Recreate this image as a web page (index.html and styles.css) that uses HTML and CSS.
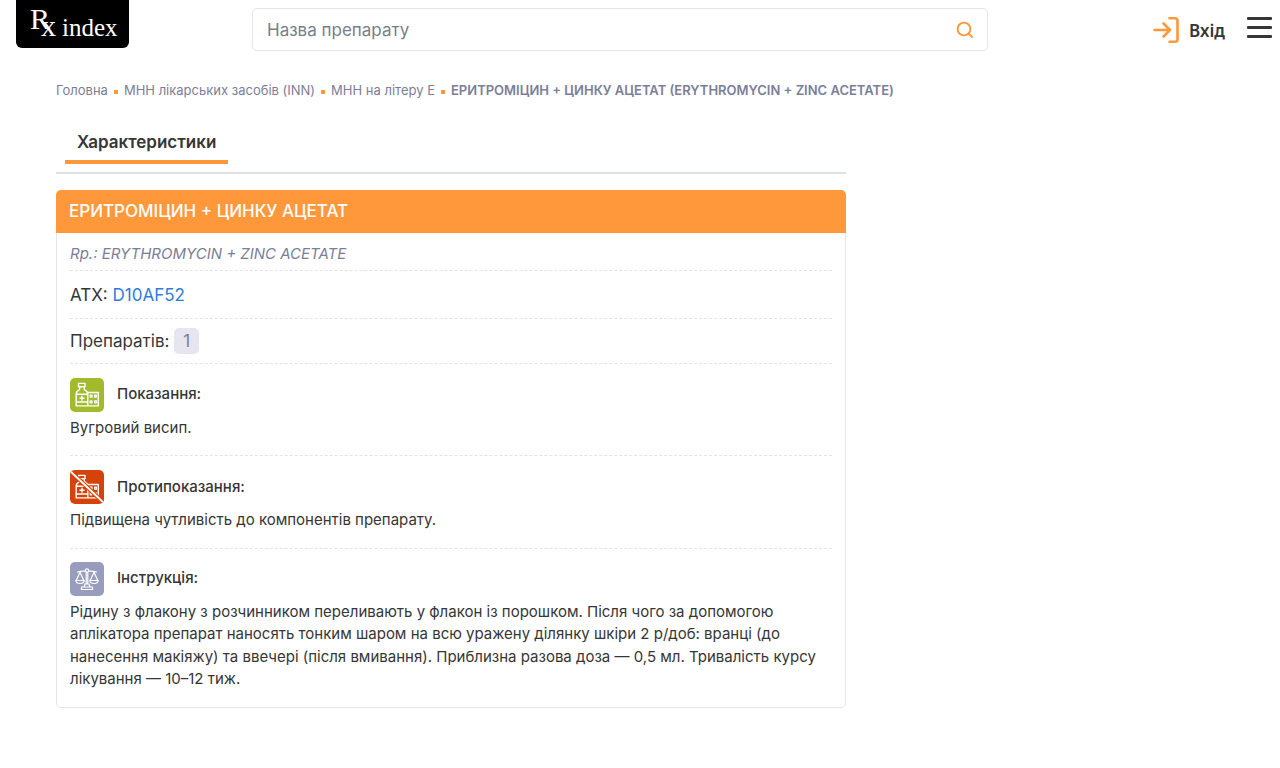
FILE: index.html
```html
<!DOCTYPE html>
<html lang="uk">
<head>
<meta charset="utf-8">
<meta name="viewport" content="width=device-width, initial-scale=1">
<title>Rx index</title>
<link rel="stylesheet" href="styles.css">
</head>
<body>
<svg class="sprite" aria-hidden="true">
  <symbol id="medicine" viewBox="0 0 34 34">
    <g fill="none" stroke="#fff" stroke-width="1.4" stroke-linejoin="round">
      <path d="M8.500 5.400h6.500v3.400H8.500zM9.600 8.800v2.800c-2.500 1.200-3.400 2.400-3.400 4.400v11.900h11.600V16c0-2-.9-3.200-3.500-4.400V8.800M6.200 16.200h11.600M6.200 24h11.600M12 17.700v5M9.500 20.200h5M17.800 14.500h10.500v13.400H17.800"/>
      <path d="M20.200 17.200h1.800v2h-1.800zM24.600 17.200h1.800v2h-1.800zM20.200 22.800h1.800v2h-1.800zM24.600 22.800h1.800v2h-1.800z" stroke-width="1.2"/>
    </g>
  </symbol>
</svg>

<header class="header">
  <a class="logo" href="#" aria-label="Rx index"><span class="logo-r">R</span><span class="logo-x">x</span><span class="logo-word">index</span></a>
  <form class="search">
    <input class="search-input" type="search" placeholder="Назва препарату" aria-label="Назва препарату">
    <button class="search-button" type="button" aria-label="Пошук">
      <svg width="18" height="18" viewBox="0 0 18 18" fill="none" stroke="#ff983b" stroke-width="1.9" stroke-linecap="round"><circle cx="8" cy="8" r="6.400"/><path d="m12.800 12.800 3.300 3.300"/></svg>
    </button>
  </form>
  <div class="actions">
    <a class="login" href="#">
      <svg width="28" height="28" viewBox="0 0 28 28" fill="none" stroke="#ff983b" stroke-width="2.6" stroke-linecap="round" stroke-linejoin="round"><path d="M2.500 14h15.500M11.500 7.500 18 14l-6.500 6.500M17.500 2.200h5.500q2.500 0 2.500 2.500v18.600q0 2.500-2.500 2.500h-5.500"/></svg>
      Вхід
    </a>
    <button class="menu" type="button" aria-label="Меню"><span class="menu-bar"></span><span class="menu-bar"></span><span class="menu-bar"></span></button>
  </div>
</header>

<div class="page">
  <nav class="breadcrumbs" aria-label="Навігація">
    <a class="crumb" href="#">Головна</a>
    <a class="crumb" href="#">МНН лікарських засобів (INN)</a>
    <a class="crumb" href="#">МНН на літеру Е</a>
    <span class="crumb crumb-current">ЕРИТРОМІЦИН + ЦИНКУ АЦЕТАТ (ERYTHROMYCIN + ZINC ACETATE)</span>
  </nav>
  <main class="content">
    <nav class="tabs"><a class="tab" href="#details">Характеристики</a></nav>
    <article class="card" id="details">
      <h1 class="card-title">ЕРИТРОМІЦИН + ЦИНКУ АЦЕТАТ</h1>
      <div class="card-body">
        <p class="row latin">Rp.: ERYTHROMYCIN + ZINC ACETATE</p>
        <p class="row atc">АТХ: <a class="link" href="#">D10AF52</a></p>
        <p class="row count">Препаратів: <a class="badge" href="#">1</a></p>
        <section class="row section">
          <h2 class="section-title">
            <svg class="icon icon-green" viewBox="0 0 34 34" aria-hidden="true"><use href="#medicine"/></svg>
            Показання:
          </h2>
          <p class="text">Вугровий висип.</p>
        </section>
        <section class="row section">
          <h2 class="section-title">
            <svg class="icon icon-red" viewBox="0 0 34 34" aria-hidden="true"><use href="#medicine"/><path d="M0 1 34 33" stroke="#d6430a" stroke-width="4"/><path d="M0 1 34 33" stroke="#fff" stroke-width="2"/></svg>
            Протипоказання:
          </h2>
          <p class="text">Підвищена чутливість до компонентів препарату.</p>
        </section>
        <section class="row section">
          <h2 class="section-title">
            <svg class="icon icon-violet" viewBox="0 0 34 34" fill="none" stroke="#fff" stroke-width="1.2" stroke-linejoin="round" stroke-linecap="round" aria-hidden="true"><circle cx="17" cy="8.500" r="1.700"/><path d="M7.500 10c3-1 5.500-.8 7.800-.8M18.700 9.200c2.300 0 4.800-.2 7.800.8M10 10.200l-3.800 8.300M10 10.200l3.800 8.300M24 10.200l-3.800 8.300M24 10.200l3.800 8.300M5.700 18.500h8.600c-.5 4-8.100 4-8.600 0zM19.700 18.500h8.600c-.5 4-8.100 4-8.600 0zM16.200 10.500v11.500M17.800 10.500v11.500M14 25l1-3h4l1 3M11.500 25h11v2.500h-11z"/></svg>
            Інструкція:
          </h2>
          <p class="text">Рідину з флакону з розчинником переливають у флакон із порошком. Після чого за допомогою аплікатора препарат наносять тонким шаром на всю уражену ділянку шкіри 2 р/доб: вранці (до нанесення макіяжу) та ввечері (після вмивання). Приблизна разова доза — 0,5 мл. Тривалість курсу лікування — 10–12 тиж.</p>
        </section>
      </div>
    </article>
  </main>
</div>
</body>
</html>
```

FILE: styles.css
```css
* { box-sizing: border-box; }
body {
  margin: 0;
  background: #fff;
  color: #363636;
  font-family: Inter, "Noto Sans", sans-serif;
  font-size: 15px;
  line-height: 1.5;
}
h1, h2, p { margin: 0; }
a { color: inherit; text-decoration: none; }
button { padding: 0; border: 0; background: none; cursor: pointer; }
.sprite { display: none; }

.header {
  display: flex;
  align-items: flex-start;
  padding: 0 8px 0 16px;
}
.logo {
  display: flex;
  width: 113px;
  height: 48px;
  padding-left: 14px;
  border-radius: 0 0 6px 6px;
  background: #000;
  color: #fff;
  font-family: "Liberation Serif", serif;
  line-height: 1;
}
.logo-r { padding-top: 4px; font-size: 30px; }
.logo-x { margin-left: -9px; padding-top: 11px; font-size: 30px; }
.logo-word { padding: 15px 0 0 6px; font-size: 25px; }
.search {
  display: flex;
  flex: 1;
  height: 43px;
  margin: 8px 164px 0 123px;
  border: 1px solid #e6e6e6;
  border-radius: 5px;
}
.search-input {
  flex: 1;
  min-width: 0;
  padding: 0 14px;
  border: 0;
  outline: 0;
  background: none;
  font: 17px Inter, sans-serif;
}
.search-input::placeholder { color: #757f8a; opacity: 1; }
.search-button { display: flex; width: 44px; align-items: center; justify-content: center; }
.actions { display: flex; gap: 22px; padding-top: 16px; }
.login {
  display: flex;
  align-items: center;
  gap: 9px;
  height: 28px;
  font: 600 17px "Noto Sans", sans-serif;
}
.menu { display: flex; flex-direction: column; gap: 6px; width: 25px; padding-top: 1px; }
.menu-bar { width: 25px; height: 3px; border-radius: 1px; background: #363636; }

.page { padding: 28px 56px; }
.breadcrumbs {
  display: flex;
  align-items: center;
  height: 24px;
  color: #7b7e99;
  font-size: 13px;
}
.crumb { display: flex; align-items: center; }
.crumb + .crumb::before {
  width: 4px;
  height: 4px;
  margin: 2px 6px 0;
  background: #ff983b;
  content: "";
}
.crumb-current { font-weight: 600; }
.content { width: 68%; max-width: 790px; padding-top: 19px; }
.tabs { display: flex; padding: 0 9px 8px; border-bottom: 2px solid #dfe2e4; }
.tab {
  padding: 8px 12px 6px;
  border-bottom: 4px solid #ff983b;
  font-size: 17px;
  font-weight: 600;
  line-height: 24px;
}
.card { margin-top: 16px; border: 1px solid #e4e6e9; border-radius: 5px; }
.card-title {
  margin: -1px -1px 0;
  padding: 0 13px;
  border-radius: 5px 5px 0 0;
  background: #ff983b;
  color: #fff;
  font-size: 17px;
  font-weight: 500;
  line-height: 43px;
}
.card-body { padding: 0 13px; }
.row + .row { border-top: 1px dashed #e2e3e9; }
.latin { padding: 10px 0 4px; color: #7b7e99; font-style: italic; }
.atc { padding: 12px 0 11px; font-size: 17px; line-height: 24px; }
.link { color: #2f7cdb; }
.count { padding: 9px 0; font-size: 17px; line-height: 24px; }
.badge {
  display: inline-block;
  padding: 1px 9px;
  border-radius: 5px;
  background: #e6e5f0;
  color: #7b7e99;
}
.section { padding: 14px 0 16px; }
.section:last-child { padding-top: 13px; }
.section-title {
  display: flex;
  align-items: center;
  gap: 13px;
  margin-bottom: 5px;
  font-size: 15px;
  font-weight: 500;
}
.icon { width: 34px; height: 34px; border-radius: 5px; }
.icon-green { background: #a2bb2d; }
.icon-red { background: #d6430a; }
.icon-violet { background: #989dbd; }
```
